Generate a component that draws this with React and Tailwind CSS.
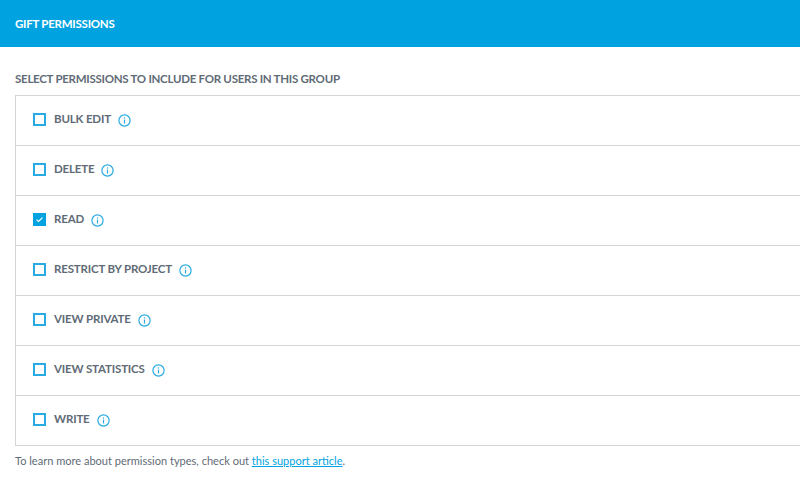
const rows = [
  { label: "BULK EDIT" },
  { label: "DELETE" },
  { label: "READ", checked: true },
  { label: "RESTRICT BY PROJECT" },
  { label: "VIEW PRIVATE" },
  { label: "VIEW STATISTICS" },
  { label: "WRITE" },
];

function Info() {
  return (
    <svg width="13" height="13" viewBox="0 0 13 13" fill="none" className="ml-[7px] mt-[1px] shrink-0">
      <circle cx="6.5" cy="6.5" r="5.6" stroke="#29aae2" strokeWidth="1.2" />
      <rect x="5.9" y="5.6" width="1.2" height="3.9" fill="#29aae2" />
      <rect x="5.9" y="3.4" width="1.2" height="1.2" fill="#29aae2" />
    </svg>
  );
}

function Box({ checked }) {
  if (checked) {
    return (
      <div className="w-[13px] h-[13px] bg-[#00a3e0] flex items-center justify-center shrink-0">
        <svg width="9" height="7" viewBox="0 0 9 7" fill="none">
          <path d="M1.5 3.6 L3.5 5.4 L7.5 1.6" stroke="#fff" strokeWidth="1.2" />
        </svg>
      </div>
    );
  }
  return <div className="w-[13px] h-[13px] border-2 border-[#29aae2] bg-white shrink-0" />;
}

export default function App() {
  return (
    <div className="w-[800px] h-[488px] overflow-hidden bg-white font-['Lato','Open_Sans',sans-serif]">
      <div className="h-[47px] bg-[#00a3e0] flex items-center pl-[15px] text-[11.5px] tracking-[-0.25px] font-bold text-white">GIFT PERMISSIONS</div>
      <div className="pl-[15px]">
        <div className="mt-[24px] h-[24px] text-[11.5px] tracking-[-0.27px] leading-[16px] font-bold text-[#5f6b76]">
          SELECT PERMISSIONS TO INCLUDE FOR USERS IN THIS GROUP
        </div>
        <div className="w-[800px] border border-[#d4d4d4]">
          {rows.map((r, i) => (
            <div key={r.label} className={`flex items-center pl-[17px] pb-[2px] ${i < rows.length - 1 ? "h-[50px] border-b border-[#d4d4d4]" : "h-[49px]"}`}>
              <Box checked={r.checked} />
              <span className="ml-[8px] mb-[2px] text-[11.5px] tracking-[-0.17px] font-bold text-[#5f6b76]">{r.label}</span>
              <Info />
            </div>
          ))}
        </div>
        <p className="mt-[7px] text-[11.04px] leading-[16px] text-[#5f6b76]">
          To learn more about permission types, check out{" "}
          <a className="text-[#00a3e0] underline" href="#">this support article</a>.
        </p>
      </div>
    </div>
  );
}
